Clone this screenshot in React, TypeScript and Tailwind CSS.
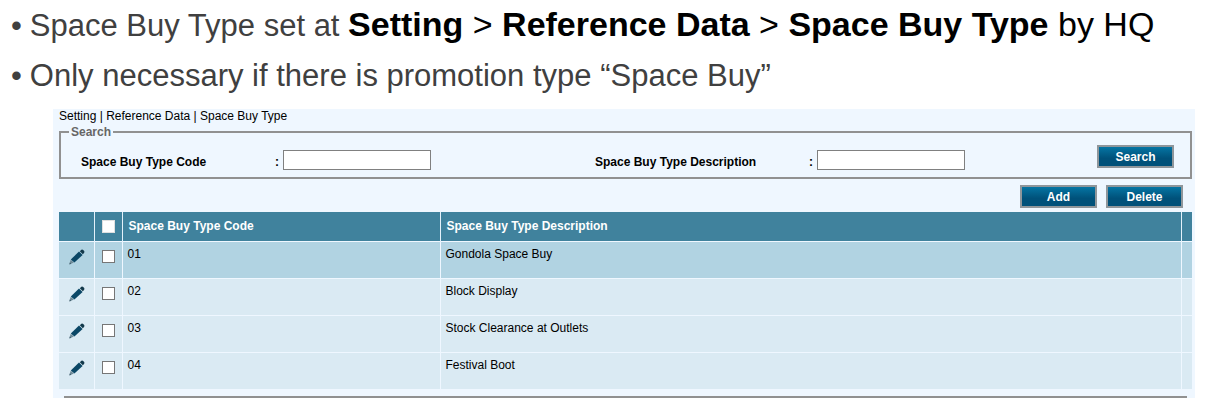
import React from "react";

const rows = [
  { code: "01", description: "Gondola Space Buy" },
  { code: "02", description: "Block Display" },
  { code: "03", description: "Stock Clearance at Outlets" },
  { code: "04", description: "Festival Boot" },
];

function PencilIcon() {
  return (
    <svg viewBox="0 0 16 16" className="block size-4" aria-hidden="true">
      <path d="M10 2.6 13.6 6 5.4 13.4 1.8 10.4Z" fill="#0a4766" />
      <path d="M10.8 2.2 12.4.8Q13.3.2 14.2 1L15.2 2.1Q15.8 3 15 3.9L13.8 5.2Z" fill="#12394b" />
      <path d="M1.7 10.8 4.9 13.6 1 15.2Q.3 15.4.5 14.6Z" fill="#6f8b99" />
      <path d="M.9 13.6 2.2 14.7.4 15.4Z" fill="#3c5a69" />
    </svg>
  );
}

function ActionButton({ children }: { children: React.ReactNode }) {
  return (
    <button
      type="button"
      className="h-[23px] w-[77px] shrink-0 border-2 border-[#8f969b] bg-linear-to-b from-[#0675a3] to-[#00517a] to-60% text-center text-[12px] leading-4 font-bold text-white"
    >
      {children}
    </button>
  );
}

function Field({ id, label, labelClass }: { id: string; label: string; labelClass: string }) {
  return (
    <div className="flex items-center pt-[5px]">
      <label htmlFor={id} className={`shrink-0 pt-1 font-bold ${labelClass}`}>
        {label}
      </label>
      <span className="w-2 shrink-0 pt-1 font-bold">:</span>
      <input id={id} type="text" className="h-5 w-[148px] border border-[#808080] bg-white px-1" />
    </div>
  );
}

const box = "block size-[13px] appearance-none bg-white border checked:bg-[#0d4a66]";

export default function App() {
  return (
    <main className="min-h-screen bg-white font-['Liberation_Sans',Arial,sans-serif]">
      <ul className="px-[11px] pt-px text-[31px] leading-[50px] text-[#404040]">
        <li className="flex gap-2">
          <span>•</span>
          <p>
            Space Buy Type set at{" "}
            <span className="text-[34px] leading-none text-black">
              <b>Setting</b> &gt; <b>Reference Data</b> &gt; <b>Space Buy Type</b> by HQ
            </span>
          </p>
        </li>
        <li className="flex gap-2">
          <span>•</span>
          <p>Only necessary if there is promotion type “Space Buy”</p>
        </li>
      </ul>

      <section className="mt-2 mr-[21px] ml-[53px] bg-[#eff7ff] pr-[3px] pl-[6px] text-[12px] leading-4 text-black">
        <nav className="leading-[15px]">Setting | Reference Data | Space Buy Type</nav>

        <fieldset className="border-2 border-[#919191] pb-[7px] pl-5">
          <legend className="-ml-3 px-[2px] font-bold text-[#666666]">Search</legend>
          <div className="grid grid-cols-[514fr_502fr_93px] items-start pt-[5px]">
            <Field id="code" label="Space Buy Type Code" labelClass="w-[194px]" />
            <Field id="description" label="Space Buy Type Description" labelClass="w-[214px]" />
            <ActionButton>Search</ActionButton>
          </div>
        </fieldset>

        <div className="flex justify-end gap-[9px] pt-[6px] pr-[9px] pb-1">
          <ActionButton>Add</ActionButton>
          <ActionButton>Delete</ActionButton>
        </div>

        <table className="w-full table-fixed border-collapse text-left">
          <colgroup>
            <col className="w-[35px]" />
            <col className="w-[28px]" />
            <col className="w-[318px]" />
            <col />
            <col className="w-[11px]" />
          </colgroup>
          <thead>
            <tr className="h-[29px] bg-[#40829d] text-white">
              <th className="border-r border-[#e4f1fa]" />
              <th className="border-r border-[#e4f1fa] pl-[7px]">
                <input type="checkbox" aria-label="Select all" className={`${box} border-[#e0e0e0]`} />
              </th>
              <th className="border-r border-[#e4f1fa] pl-[6px]">Space Buy Type Code</th>
              <th className="border-r border-[#e4f1fa] pl-[6px]">Space Buy Type Description</th>
              <th />
            </tr>
          </thead>
          <tbody>
            {rows.map((row) => (
              <tr
                key={row.code}
                className="h-[37px] border-t border-[#eff7ff] bg-[#daeaf3] align-top first:bg-[#b1d3e2]"
              >
                <td className="border-r border-[#eff7ff] pt-[7px] pl-[10px]">
                  <button type="button" aria-label={`Edit ${row.code}`} className="block">
                    <PencilIcon />
                  </button>
                </td>
                <td className="border-r border-[#eff7ff] pt-2 pl-[7px]">
                  <input type="checkbox" aria-label={`Select ${row.code}`} className={`${box} border-[#767676]`} />
                </td>
                <td className="border-r border-[#eff7ff] pt-1 pl-[5px]">{row.code}</td>
                <td className="border-r border-[#eff7ff] pt-1 pl-[5px]">{row.description}</td>
                <td />
              </tr>
            ))}
          </tbody>
        </table>

        <div className="mt-[7px] mr-[5px] ml-[5px] h-[2px] bg-[#919191]" />
      </section>
    </main>
  );
}
